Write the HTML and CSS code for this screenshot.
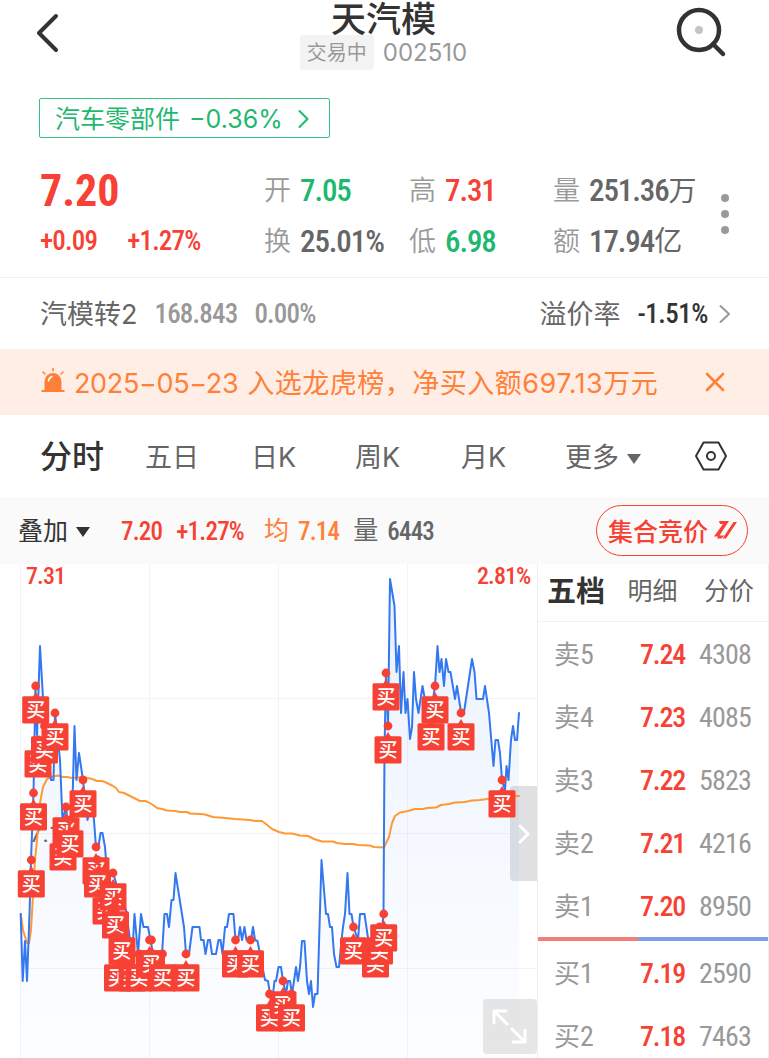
FILE: index.html
```html
<!DOCTYPE html>
<html lang="zh-CN">
<head>
  <meta charset="UTF-8">
  <title>天汽模 002510</title>
  <link rel="stylesheet" href="styles.css">
</head>
<body>

  <header class="header">
    <svg class="back" width="26" height="40" viewBox="0 0 26 40"><path d="M22 3 L5 20 L22 37"/></svg>
    <div class="title">
      <h1>天汽模</h1>
      <p><span class="status">交易中</span><span class="code">002510</span></p>
    </div>
    <svg class="search" width="56" height="56" viewBox="0 0 56 56">
      <circle cx="26" cy="26" r="20"/>
      <path d="M40 40 L50 50"/>
      <circle class="dot" cx="26" cy="26" r="4"/>
    </svg>
  </header>

  <div class="sector">
    <span>汽车零部件</span><span class="pct">−0.36%</span>
    <svg width="12" height="20" viewBox="0 0 12 20"><path d="M1.500 2 L9.500 10 L1.500 18"/></svg>
  </div>

  <section class="quote">
    <div class="price">
      <b class="num">7.20</b>
      <p><span class="num">+0.09</span><span class="num">+1.27%</span></p>
    </div>
    <div class="stats">
      <div><label>开</label><span class="num green">7.05</span></div>
      <div><label>高</label><span class="num red">7.31</span></div>
      <div><label>量</label><span class="num">251.36</span><i>万</i></div>
      <div><label>换</label><span class="num">25.01%</span></div>
      <div><label>低</label><span class="num green">6.98</span></div>
      <div><label>额</label><span class="num">17.94</span><i>亿</i></div>
    </div>
    <div class="more"><i></i><i></i><i></i></div>
  </section>

  <section class="bond">
    <span class="name">汽模转2</span>
    <span class="num val">168.843</span>
    <span class="num val">0.00%</span>
    <span class="name premium">溢价率</span>
    <span class="num rate">-1.51%</span>
    <svg width="12" height="20" viewBox="0 0 12 20"><path d="M1.500 2 L10 10 L1.500 18"/></svg>
  </section>

  <section class="notice">
    <svg class="siren" width="24" height="26" viewBox="0 0 24 26">
      <path class="fill" d="M3.500 22 V13.500 A8.500 8.500 0 0 1 20.500 13.500 V22 H23.500 V24 H0.500 V22 Z"/>
      <path class="ray" d="M12 0.500 V3 M2 4 L4 6 M22 4 L20 6"/>
      <path class="shine" d="M7.500 13 Q8 9.500 11 8.500"/>
    </svg>
    <span class="date">2025−05−23</span>
    <span class="msg">入选龙虎榜，净买入额697.13万元</span>
    <svg class="close" width="20" height="20" viewBox="0 0 20 20"><path d="M2 2 L18 18 M18 2 L2 18"/></svg>
  </section>

  <nav class="tabs">
    <span class="active">分时</span>
    <span>五日</span>
    <span>日K</span>
    <span>周K</span>
    <span>月K</span>
    <span>更多<i class="caret"></i></span>
    <svg width="34" height="30" viewBox="0 0 34 30">
      <path d="M9.500 1.500 H24.500 L32 15 L24.500 28.500 H9.500 L2 15 Z"/>
      <circle cx="17" cy="15" r="4"/>
    </svg>
  </nav>

  <section class="info">
    <span class="overlay">叠加<i class="caret"></i></span>
    <span class="num red">7.20</span>
    <span class="num red">+1.27%</span>
    <span class="avg">均</span>
    <span class="num avg">7.14</span>
    <span class="vol">量</span>
    <span class="num vol">6443</span>
    <button class="auction">集合竞价
      <svg width="23" height="18" viewBox="0 0 23 18">
        <path d="M5 0 H15 L5.500 14.500 H10 L7.500 17.500 H3 L4 15.500 L0 15.500 L9 3 H6 Z M19.500 1 H23 L12 17.500 H8.500 Z"/>
      </svg>
    </button>
  </section>

  <main class="main">
    <div class="chart">
      <div class="fold"><svg width="14" height="22" viewBox="0 0 14 22"><path d="M3 3 L11 11 L3 19"/></svg></div>
      <svg class="plot" width="537" height="494" viewBox="0 564 537 494">
        <defs>
          <linearGradient id="fade" gradientUnits="userSpaceOnUse" x1="0" y1="579" x2="0" y2="1058">
            <stop offset="0" stop-color="#3478f0" stop-opacity="0.1"/>
            <stop offset="1" stop-color="#3478f0" stop-opacity="0.01"/>
          </linearGradient>
        </defs>
        <path class="grid" d="M20.500 564 V1058 M149.500 564 V1058 M278.500 564 V1058 M407.500 564 V1058 M20 698.500 H537 M20 833.500 H510 M20 968.500 H537"/>
        <path id="area" fill="url(#fade)"/>
        <text class="mid" x="29" y="842">7.1</text>
        <polyline id="avg-line" points="20.700,914 23,930 27,943 29,943 31,930 33,895 35,860 38,830 40,803 43,787 47,779 51,777 58,775.500 63,777 67,777 72,778 83,777 88,778 92,779 97,781 102,781 105,782 109,784 113,786 116,788 119,792 124,793 130,796 136,799 140,801 145,801 148,802 153,805 157,808 162,809 167,810.500 175,811 180,812 187,812 190,813.500 200,814 205,814.500 213,817 225,818 235,819 250,820 255,821 262,821 266,824 272,829 279,832 285,833.500 292,833.500 300,835.500 308,836 314,839 322,841.500 333,841.500 337,843 345,844 353,844 358,845 370,845.500 374,847 384,847.500 386,843 389,837 392,823 395,816 400,812.500 408,811 415,809 423,809 427,808 436,807.500 441,805 449,804 455,802.500 465,802 472,800.500 480,800 487,799 500,797 519,796"/>
        <polyline id="price-line" points="20.700,914 22.700,981 25,941 27,981 29.500,914 31,860 33.500,793 35.500,686 37,735 40,646 43,698 45,740 48,753 51,780 53.500,780 55,713 58,740 60,760 62.500,820 66,807 69,835 72.500,800 74.500,726 76.500,780 79,753 83,780 86,807 87.500,820 90,807 93,807 96,847 98,850 100.500,833 102.500,833 105,847 107,873 113,873 117,886 126,910 130,940 132.500,950 134.500,914 138,954 141,914 143.500,927 148,927 150.500,940 153,954 162,954 164.500,914 167,914 169,927 171.500,900 173.500,900 175.500,873 178,889 184,927 186,954 189,954 192.500,927 199.500,927 201,940 203.500,940 205.500,954 208,940 210,940 212,954 216,954 218.500,940 220.500,940 222.500,954 225,927 227,927 229,914 233.500,914 235.500,940 238,940 240,927 242,940 244.500,927 246.500,940 251,940 253,927 255,940 257.500,941 260,954 265,980 268,981 270,994 273,994 274.500,981 276,981 278.500,967 281,967 283,981 286,994 288,981 290,981 292,994 294,981 296,967 298,981 300,967 302,941 304.500,941 307,981 309,994 311,981 313,1007 315,994 317.500,994 319.500,927 321.500,860 326,914 328,914 330,927 332,927 334,954 336.500,967 339,967 341,945 343,927 345,914 347.500,873 349.500,914 351.500,914 353.500,927 358,940 360,914 364.500,914 368,938 372,950 380,950 383.500,914 384.500,750 386,673 388,726 390,579 394.500,606 396.500,672 399,646 401,713 403.500,672 405.500,713 407.500,699 410,739 412,727 414,672 416,699 418.500,713 422.500,686 425,700 431,713 435,686 437.500,646 439.500,672 441.500,659 444,686 446,659 448.500,672 450.500,672 455,699 457,686 461,712 464,712 466,699 472,659 474.500,672 476.500,699 483,699 485,686 489,713 493.500,766 495.500,740 498,740 500,753 502,780 505,790 506.500,766 508.500,780 511,740 513,726 515,740 517,740 519,713"/>
        <g id="marks"></g>
        <text class="limit" x="26" y="584">7.31</text>
        <text class="limit" x="477" y="584">2.81%</text>
      </svg>
      <div class="expand"><svg width="36" height="36" viewBox="0 0 36 36"><path d="M15 15 L2 2 M2 14 V2 H14 M20 20 L33 33 M33 21 V33 H21"/></svg></div>
    </div>

    <aside class="book">
      <div class="book-tabs"><b>五档</b><span>明细</span><span>分价</span></div>
      <div class="row"><span>卖<em class="num">5</em></span><b class="num">7.24</b><span class="num">4308</span></div>
      <div class="row"><span>卖<em class="num">4</em></span><b class="num">7.23</b><span class="num">4085</span></div>
      <div class="row"><span>卖<em class="num">3</em></span><b class="num">7.22</b><span class="num">5823</span></div>
      <div class="row"><span>卖<em class="num">2</em></span><b class="num">7.21</b><span class="num">4216</span></div>
      <div class="row"><span>卖<em class="num">1</em></span><b class="num">7.20</b><span class="num">8950</span></div>
      <div class="ratio"></div>
      <div class="row"><span>买<em class="num">1</em></span><b class="num">7.19</b><span class="num">2590</span></div>
      <div class="row"><span>买<em class="num">2</em></span><b class="num">7.18</b><span class="num">7463</span></div>
    </aside>
  </main>

  <script>
    // x and y of each buy point, left to right
    const buys = [
      [31.3, 860], [33.5, 793], [35.7, 686], [38, 740], [44.5, 726], [55, 713],
      [63, 833], [66, 807], [70, 820], [83, 780], [96, 847], [97.5, 860],
      [106, 887], [113, 873], [115.5, 901], [117.5, 954], [122, 927], [132, 954],
      [139, 954], [149.5, 940], [151.5, 940], [162.5, 954], [186, 954],
      [235.5, 940], [250.5, 940], [269.5, 994], [283, 981], [291.5, 994],
      [353.5, 927], [375.5, 940], [379.5, 927], [383.7, 914],
      [386, 673], [388, 726], [431, 713], [435, 686], [461, 713], [502, 780]
    ];

    document.getElementById('marks').innerHTML = buys.map(([x, y]) => `
      <circle cx="${x}" cy="${y}" r="4.4"/>
      <path d="M${x - 3} ${y + 11} L${x} ${y + 6} L${x + 3} ${y + 11} Z"/>
      <rect x="${x - 13.5}" y="${y + 10.3}" width="27" height="27.2" rx="1.5"/>
      <text x="${x}" y="${y + 31}">买</text>`).join('');

    const points = document.getElementById('price-line').getAttribute('points');
    document.getElementById('area').setAttribute('d', `M20.7 1058 L${points} L519 1058 Z`);
  </script>

</body>
</html>
```

FILE: styles.css
```css
* {
  box-sizing: border-box;
}

body {
  margin: 0;
  width: 769px;
  height: 1058px;
  overflow: hidden;
  background: #fff;
  color: #666;
  font-family: Inter, 'Noto Sans CJK SC', sans-serif;
  font-size: 27px;
  line-height: 1;
  white-space: nowrap;
}

h1, p {
  margin: 0;
}

i, em {
  font-style: normal;
}

svg {
  display: block;
  flex: none;
  fill: none;
  stroke-linecap: round;
  stroke-linejoin: round;
}

.num {
  font-family: Roboto, sans-serif;
  font-stretch: 75%;
  font-weight: 500;
  letter-spacing: -0.8px;
}

.red {
  color: #f74134;
}

.green {
  color: #1fb870;
}

/* header */
.header {
  height: 98px;
  display: flex;
  justify-content: space-between;
  padding: 0 40px 0 34px;
}

.back {
  margin-top: 13px;
  stroke: #333;
  stroke-width: 4;
}

.title {
  margin-left: 34px;
  text-align: center;
}

.title h1 {
  font-size: 35px;
  line-height: 38px;
  height: 35px;
  font-weight: 500;
  color: #333;
}

.title p {
  display: flex;
  align-items: center;
}

.status {
  height: 35px;
  padding: 0 7px;
  margin-right: 9px;
  border-radius: 3px;
  background: #f3f3f3;
  font-size: 20px;
  line-height: 37px;
  color: #999;
}

.code {
  padding-top: 1px;
  font-size: 24px;
  color: #999;
}

.search {
  margin-top: 4px;
  stroke: #333;
  stroke-width: 4.5;
}

.search .dot {
  stroke: none;
  fill: #c4c4c4;
}

.sector {
  width: 291px;
  height: 40px;
  margin-left: 39px;
  padding: 2px 0 0 15px;
  border: 1.5px solid #36c27f;
  border-radius: 2px;
  display: flex;
  align-items: center;
  font-size: 25px;
  color: #1fb870;
}

.sector .pct {
  margin: 0 15px 0 9px;
}

.sector svg {
  stroke: #1fb870;
  stroke-width: 2;
}

/* quote */
.quote {
  height: 140px;
  padding: 27px 0 0 40px;
  border-bottom: 1px solid #eee;
  display: flex;
}

.price {
  width: 224px;
  color: #f74134;
}

.price b {
  display: block;
  font-size: 44px;
  line-height: 52px;
  font-weight: 700;
  letter-spacing: 0;
}

.price p {
  display: flex;
  gap: 30px;
  font-size: 27px;
  line-height: 49px;
}

.stats {
  display: grid;
  grid-template-columns: 145px 144px 160px;
  grid-template-rows: 51px 50px;
}

.stats div {
  display: flex;
  align-items: center;
}

.stats label {
  width: 36px;
  font-weight: 350;
  color: #999;
}

.stats .num {
  font-size: 31px;
  letter-spacing: -1.1px;
}

.stats i {
  font-size: 28px;
}

.more {
  display: flex;
  flex-direction: column;
  gap: 8px;
  padding-top: 29px;
  margin-left: 8px;
}

.more i {
  width: 8px;
  height: 8px;
  border-radius: 50%;
  background: #999;
}

/* bond row */
.bond {
  height: 71px;
  padding: 1px 38px 0 40px;
  display: flex;
  align-items: center;
}

.bond .val {
  margin-left: 17px;
  color: #999;
}

.bond .premium {
  margin-left: auto;
}

.bond .rate {
  margin: 0 11px 0 17px;
  color: #333;
  letter-spacing: -0.5px;
}

.bond svg {
  stroke: #999;
  stroke-width: 2;
}

/* notice */
.notice {
  height: 66px;
  padding: 2px 44px 0 41px;
  background: #ffeee6;
  display: flex;
  align-items: center;
  color: #ff8038;
}

.siren {
  margin: 0 9px 4px 0;
}

.siren .fill {
  fill: #ff8038;
}

.siren .ray {
  stroke: #ff8038;
  stroke-width: 1.5;
}

.siren .shine {
  stroke: #fff;
  stroke-width: 1.5;
}

.notice .date {
  letter-spacing: -0.35px;
}

.notice .msg {
  margin-left: 9px;
  letter-spacing: 0.5px;
}

.close {
  margin: 0 0 2px auto;
  stroke: #ff8038;
  stroke-width: 2.6;
}

/* period tabs */
.tabs {
  height: 82px;
  padding: 2px 0 0 40px;
  display: grid;
  grid-template-columns: 105px 106px 104px 106px 104px 129px 34px;
  align-items: center;
}

.tabs .active {
  font-size: 32px;
  font-weight: 500;
  color: #333;
}

.tabs svg {
  margin-bottom: 2px;
  stroke: #333;
  stroke-width: 2;
}

.caret {
  display: inline-block;
  margin-left: 8px;
  vertical-align: 3px;
  border: 7px solid transparent;
  border-top: 10px solid #666;
  border-bottom: 0;
}

.info {
  height: 67px;
  padding: 0 21px 0 18px;
  background: #fafafa;
  display: flex;
  align-items: center;
  font-size: 25px;
}

.info .overlay {
  width: 103px;
  padding-top: 2px;
  color: #333;
}

.info .overlay .caret {
  border-top-color: #333;
}

.info .num {
  margin-right: 14px;
  padding-top: 1px;
}

.info .avg {
  color: #ff8038;
}

.info span.avg:not(.num) {
  margin: 0 9px 0 6px;
}

.info span.vol:not(.num) {
  margin: 0 9px 0 0;
}

.auction {
  width: 152px;
  height: 51px;
  margin-left: auto;
  padding: 0 0 2px 11px;
  border: 1px solid #f74134;
  border-radius: 26px;
  background: none;
  display: flex;
  align-items: center;
  gap: 6px;
  font: 500 25px 'Noto Sans CJK SC', sans-serif;
  color: #f74134;
}

.auction svg {
  fill: #f74134;
}

/* chart */
.main {
  display: flex;
  height: 494px;
}

.chart {
  position: relative;
  width: 537px;
  overflow: hidden;
}

.plot {
  position: relative;
}

.grid {
  stroke: #f3f3f5;
}

.chart text {
  font-family: Roboto, 'Noto Sans CJK SC', sans-serif;
}

.chart .limit {
  fill: #f74134;
  font-size: 24px;
  font-stretch: 75%;
  font-weight: 500;
  letter-spacing: -0.9px;
}

.chart .mid {
  fill: #666;
  font-size: 24px;
}

#price-line {
  stroke: #3478f0;
  stroke-width: 2;
}

#avg-line {
  stroke: #ff9933;
  stroke-width: 2;
}

#marks {
  fill: #f74134;
}

#marks text {
  fill: #fff;
  font-size: 19px;
  font-weight: 500;
  text-anchor: middle;
}

.fold {
  position: absolute;
  right: 0;
  top: 222px;
  width: 27px;
  height: 95px;
  border-radius: 4px 0 0 4px;
  background: #e0e1e3;
  display: flex;
  align-items: center;
  justify-content: center;
}

.expand {
  position: absolute;
  right: 0;
  top: 435px;
  width: 54px;
  height: 55px;
  border-radius: 4px;
  background: rgba(210, 210, 210, 0.55);
  display: flex;
  align-items: center;
  justify-content: center;
}

.fold svg,
.expand svg {
  stroke: #fff;
  stroke-width: 3;
}

/* order book */
.book {
  width: 232px;
  border-left: 1px solid #eee;
  border-right: 1px solid #eee;
}

.book-tabs {
  height: 58px;
  padding: 0 14px 3px 9px;
  border-bottom: 1px solid #f2f2f2;
  display: flex;
  align-items: center;
  justify-content: space-between;
  font-size: 25px;
}

.book-tabs b {
  font-size: 29px;
  font-weight: 700;
  color: #333;
}

.book-tabs span:last-child {
  margin-left: 4px;
}

.row {
  height: 63px;
  padding-top: 2px;
  display: grid;
  grid-template-columns: 86px 59px auto;
  align-items: center;
  padding-left: 16px;
  font-size: 26px;
  color: #999;
}

.row .num {
  font-size: 28px;
  font-weight: 450;
}

.row b.num {
  font-weight: 500;
  letter-spacing: -1.2px;
  color: #f74134;
}

.ratio {
  height: 4px;
  background: linear-gradient(to right, #f07f78 43.5%, #7b9fe8 43.5%);
}
```
